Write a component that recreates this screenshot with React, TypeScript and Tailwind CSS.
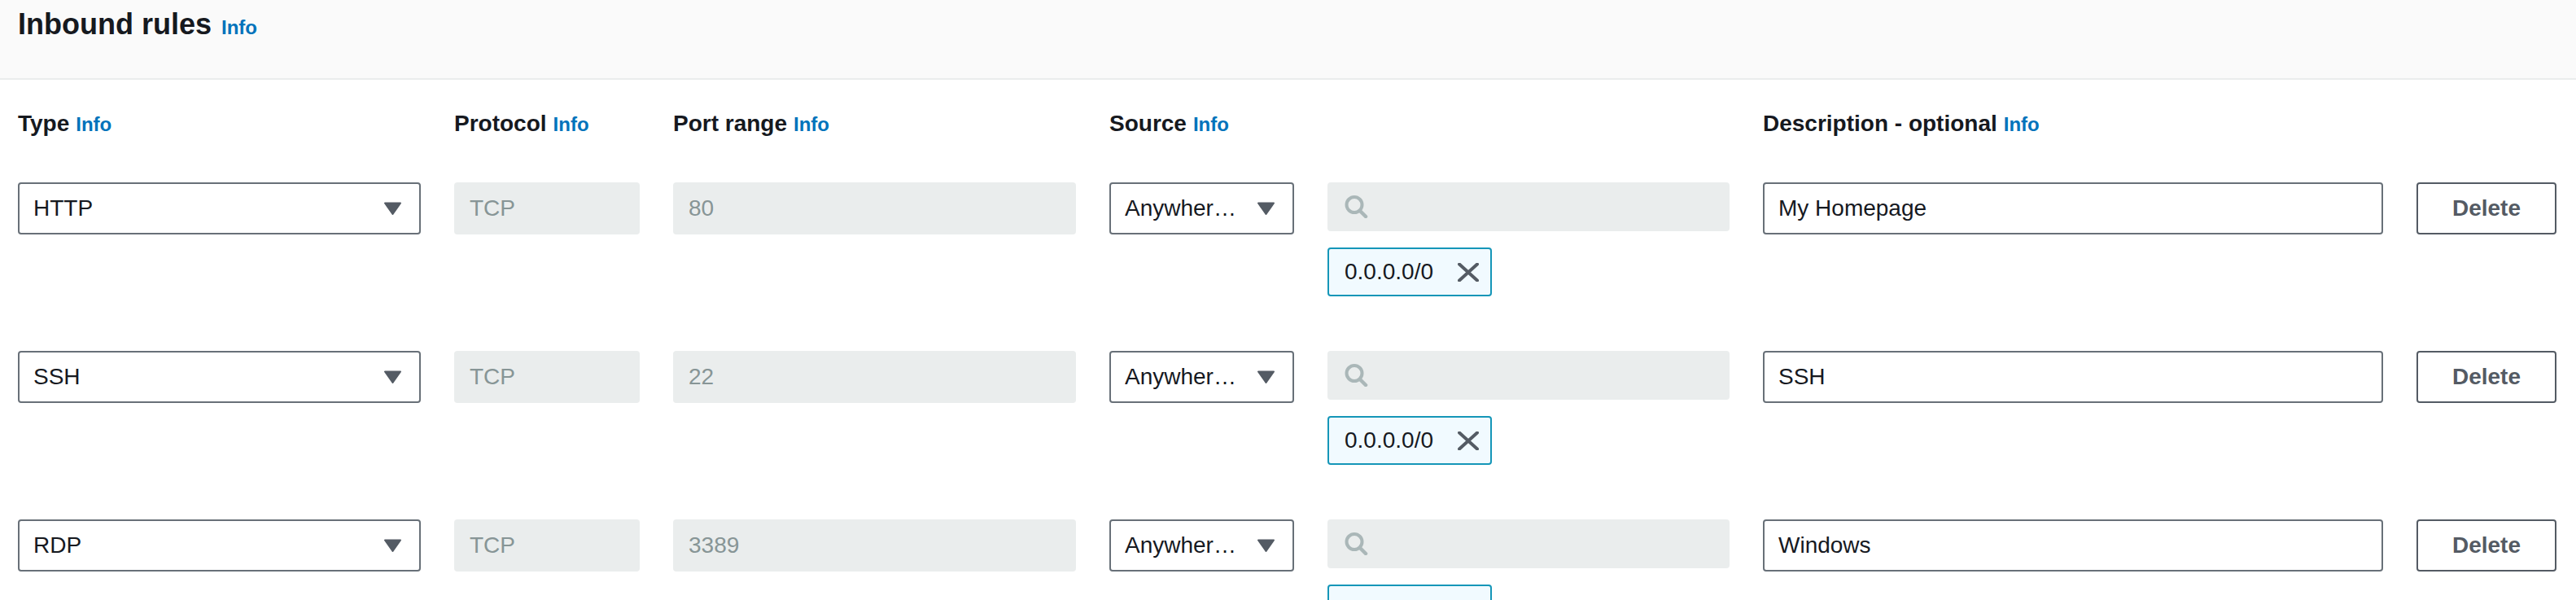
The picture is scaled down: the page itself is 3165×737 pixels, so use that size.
import React from "react";

const FONT = { fontFamily: '"Liberation Sans", Arial, sans-serif' };

const rules = [
  { type: "HTTP", protocol: "TCP", port: "80", source: "Anywher…", cidr: "0.0.0.0/0", description: "My Homepage" },
  { type: "SSH", protocol: "TCP", port: "22", source: "Anywher…", cidr: "0.0.0.0/0", description: "SSH" },
  { type: "RDP", protocol: "TCP", port: "3389", source: "Anywher…", cidr: "0.0.0.0/0", description: "Windows" },
];

const COLS = "grid grid-cols-[495px_228px_495px_227px_494px_762px_172px] gap-x-[41px]";

export default function App() {
  return (
    <div className="w-full min-h-screen bg-white text-[#16191f]" style={FONT}>
      {/* Header */}
      <div className="h-[98px] bg-[#fafafa] border-b-2 border-[#eaeded] pl-[22px] pt-[8px]">
        <div className="flex items-baseline gap-[12px]">
          <h2 className="text-[36px] leading-[44px] font-bold">Inbound rules</h2>
          <InfoLink />
        </div>
      </div>

      <div className="pl-[22px] pr-[23px]">
        {/* Column labels */}
        <div className={`${COLS} mt-[34px]`}>
          <Label text="Type" />
          <Label text="Protocol" />
          <Label text="Port range" />
          <Label text="Source" />
          <div />
          <Label text="Description - optional" />
          <div />
        </div>

        {/* Rule rows */}
        {rules.map((r, i) => (
          <div key={i} className={`${COLS} items-start ${i === 0 ? "mt-[51px]" : "mt-[67px]"}`}>
            <Select value={r.type} />
            <DisabledInput value={r.protocol} />
            <DisabledInput value={r.port} />
            <Select value={r.source} />
            <div>
              <div className="h-[60px] rounded-[4px] bg-[#eaeded] flex items-center pl-[21px]">
                <SearchIcon />
              </div>
              <div className="mt-[20px] w-[202px] h-[60px] rounded-[4px] border-2 border-[#1596b8] bg-[#f1faff] flex items-center pl-[19px] pr-[14px]">
                <span className="text-[28px] leading-[40px]">{r.cidr}</span>
                <XIcon />
              </div>
            </div>
            <div className="h-[64px] rounded-[4px] border-2 border-[#687078] bg-white flex items-center pl-[17px]">
              <span className="text-[28px] leading-[40px]">{r.description}</span>
            </div>
            <button className="h-[64px] rounded-[4px] border-2 border-[#545b64] bg-white text-[#545b64] text-[28px] leading-[40px] font-bold flex items-center justify-center">
              Delete
            </button>
          </div>
        ))}
      </div>
    </div>
  );
}

function InfoLink() {
  return <span className="text-[24px] font-bold text-[#0073bb]">Info</span>;
}

function Label({ text }: { text: string }) {
  return (
    <div className="flex items-baseline gap-[8px] leading-[40px] whitespace-nowrap">
      <span className="text-[28px] font-bold">{text}</span>
      <InfoLink />
    </div>
  );
}

function Select({ value }: { value: string }) {
  return (
    <div className="h-[64px] rounded-[4px] border-2 border-[#687078] bg-white flex items-center pl-[17px] pr-[22px]">
      <span className="flex-1 min-w-0 whitespace-nowrap overflow-hidden text-[28px] leading-[40px]">{value}</span>
      <svg width="21" height="16" viewBox="0 0 21 16" className="shrink-0 ml-[12px]">
        <path d="M1 1.5 L20 1.5 L10.5 15 Z" fill="#545b64" stroke="#545b64" strokeWidth="2" strokeLinejoin="round" />
      </svg>
    </div>
  );
}

function DisabledInput({ value }: { value: string }) {
  return (
    <div className="h-[64px] rounded-[4px] bg-[#eaeded] flex items-center pl-[19px]">
      <span className="text-[28px] leading-[40px] text-[#879596]">{value}</span>
    </div>
  );
}

function SearchIcon() {
  return (
    <svg width="30" height="28" viewBox="0 0 30 28" fill="none">
      <circle cx="12" cy="11.5" r="9.5" stroke="#aab7b8" strokeWidth="4" />
      <path d="M19 19 L26 26" stroke="#aab7b8" strokeWidth="4.5" strokeLinecap="round" />
    </svg>
  );
}

function XIcon() {
  return (
    <svg width="26" height="23" viewBox="0 0 26 23" fill="none" className="ml-auto">
      <path d="M2 1.5 L24 21.5 M24 1.5 L2 21.5" stroke="#545b64" strokeWidth="4" strokeLinecap="round" />
    </svg>
  );
}
